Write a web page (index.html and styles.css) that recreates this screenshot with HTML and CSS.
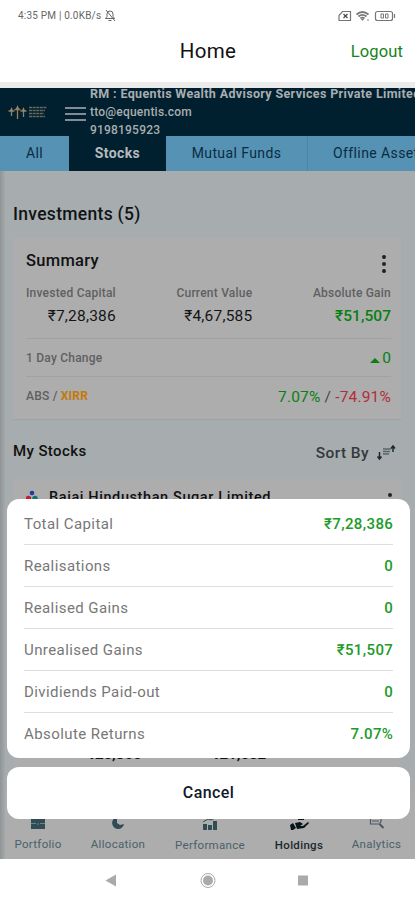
FILE: index.html
```html
<!DOCTYPE html>
<html lang="en">
<head>
<meta charset="utf-8">
<title>Home</title>
<link rel="stylesheet" href="styles.css">
</head>
<body>
<div class="phone">
  <div class="status">
    <span class="clock">4:35 PM | 0.0KB/s</span>
    <svg class="bell" width="12" height="13" viewBox="0 0 12 13" fill="none" stroke="#666" stroke-width="1"><path d="M1.5 9.5h9L9 7.500V5a3 3 0 0 0-6 0v2.500zM4.500 11.500h3M2 1l9 11"/></svg>
    <svg class="signals" width="58" height="12" viewBox="0 0 58 12" fill="none" stroke="#777" stroke-width="1.200"><path d="M4.500 1.500h8v9H1v-5z"/><path stroke="#444" d="m5.500 4 4 4m0-4-4 4"/><path d="M18.500 4.500q6-5 12 0M20.500 6.500q4-3.300 8 0M22.500 8.500q2-1.700 4 0" stroke-width="1.800"/><path d="m24.500 11-1.500-2h3z" fill="#777" stroke="none"/><circle cx="30" cy="10" r=".8" fill="#777" stroke="none"/><rect x="37.500" y="1.500" width="17" height="9" rx="2"/><path d="M56.500 4v4"/><path d="M43 4v4h2.500V4zM47.500 4v4H50V4z" stroke-width="1"/></svg>
  </div>
  <div class="titlebar"><span></span><span class="title">Home</span><span class="logout">Logout</span></div>
  <div class="strip"></div>

  <div class="app">
    <div class="banner">
      <svg class="brand" width="40" height="16" viewBox="0 0 40 16" fill="none" stroke="#947f63"><path d="M3.500 5v7M9.500 3v12M15.500 5v8M.5 7h6M6.500 5.500h6M12.500 7h6" stroke-width="1.300"/><path d="m3.500 3 1.500 4H2zM9.500 1 11 5H8zM15.500 3 17 7h-3z" fill="#a18866" stroke="none"/><path d="M21 3.500h18M21 6.500h16M21 9.500h15M21 12.500h16" stroke="#66695c" stroke-width="1.500" stroke-dasharray="3 .6"/></svg>
      <div class="burger"><i></i><i></i><i></i></div>
      <div class="rm"><div class="rm-name">RM : Equentis Wealth Advisory Services Private Limited</div><div class="rm-mail">tto@equentis.com</div><div class="rm-phone">9198195923</div></div>
    </div>
    <div class="tabs"><div class="tab all">All</div><div class="tab active">Stocks</div><div class="tab funds">Mutual Funds</div><div class="tab offline">Offline Assets</div></div>

    <div class="content">
      <div class="heading">Investments (5)</div>
      <div class="card">
        <div class="card-head"><span>Summary</span><div class="dots"><i></i><i></i><i></i></div></div>
        <div class="figures">
          <div><div class="label">Invested Capital</div><div class="value">₹7,28,386</div></div>
          <div><div class="label">Current Value</div><div class="value">₹4,67,585</div></div>
          <div><div class="label">Absolute Gain</div><div class="value green">₹51,507</div></div>
        </div>
        <div class="line"><span class="label">1 Day Change</span><span class="day green"><i class="up"></i>0</span></div>
        <div class="line"><span class="label abs">ABS / <b>XIRR</b></span><span class="rates"><span class="green">7.07%</span> / <span class="red">-74.91%</span></span></div>
      </div>
      <div class="stocks-head"><span class="my">My Stocks</span><span class="sort">Sort By <svg width="20" height="18" viewBox="0 0 20 18" fill="none" stroke="#20282c" stroke-width="1.500"><path d="M3.500 9v7M1.500 13.500l2 2.500 2-2.500M17 9V3M15 5.500 17 3l2 2.500"/><path d="M7 6h8M7 8.500h7M7 11h6" stroke="#59656a" stroke-width="1.400"/></svg></span></div>
      <div class="stock">
        <div class="stock-head">
          <svg width="12" height="14" viewBox="0 0 12 14"><circle cx="6" cy="3" r="2.300" fill="#203a9a"/><circle cx="2.500" cy="8.500" r="2.700" fill="#c0202a"/><circle cx="9" cy="8.500" r="2.700" fill="#0d7468"/></svg>
          <span>Bajaj Hindusthan Sugar Limited</span><div class="dots"><i></i><i></i><i></i></div>
        </div>
        <div class="stock-values"><span>₹26,800</span><span>₹21,652</span></div>
      </div>
    </div>

    <div class="nav">
      <div class="item i1"><svg width="16" height="14" viewBox="0 0 16 14" fill="#304c54"><path d="M1 3h4V1h6v2h4v10H1z"/><path d="M1 7.500h5m4 0h5M7 8h2" stroke="#8b999d" stroke-width=".7"/></svg><span>Portfolio</span></div>
      <div class="item i2"><svg width="14" height="14" viewBox="0 0 14 14" fill="#304c54"><path d="M6 1v6l3 2 4-1a6 6 0 1 1-7-7z"/></svg><span>Allocation</span></div>
      <div class="item i3"><svg width="16" height="14" viewBox="0 0 16 14" fill="#304c54"><path d="M1 7h4v6H1zM6 8h4v5H6zM11 4h4v9h-4z"/><path d="m1 5 5-3 3 1 4-2" fill="none" stroke="#304c54"/></svg><span>Performance</span></div>
      <div class="item i4"><svg width="20" height="14" viewBox="0 0 20 14" fill="#07141c"><path d="m1 8 3-2 3 5-3 2H2zM6 6l5-1 3 2-3 2h3l5-4q2 1-1 3l-3 3-7 1zM9 1h6v2H9z"/></svg><span>Holdings</span></div>
      <div class="item i5"><svg width="16" height="14" viewBox="0 0 16 14" fill="none" stroke="#48585e" stroke-width="1.200"><path d="M1.500 1v7h9M3 5h7"/><path d="M10.500 1a4 4 0 0 1 0 6.500"/><path d="m10.500 8 4 4" stroke-width="2"/></svg><span>Analytics</span></div>
    </div>
    <div class="edge"></div>

    <div class="sheet">
      <div class="sheet-list">
        <div class="row"><span>Total Capital</span><b>₹7,28,386</b></div>
        <div class="row"><span>Realisations</span><b>0</b></div>
        <div class="row"><span>Realised Gains</span><b>0</b></div>
        <div class="row"><span>Unrealised Gains</span><b>₹51,507</b></div>
        <div class="row"><span>Dividiends Paid-out</span><b>0</b></div>
        <div class="row"><span>Absolute Returns</span><b>7.07%</b></div>
      </div>
      <div class="cancel">Cancel</div>
    </div>
  </div>
  <div class="system"><svg width="415" height="41" viewBox="0 0 415 41" fill="#aaa"><path d="m105.500 21.500 10.500-6v12z"/><circle cx="208" cy="21.500" r="5"/><circle cx="208" cy="21.500" r="7" fill="none" stroke="#aaa"/><path d="M298 16.500h10v10h-10z"/></svg></div>
</div>
</body>
</html>
```
FILE: styles.css
```css
* { box-sizing: border-box; }
body { margin: 0; background: #fff; font-family: Roboto, "Liberation Sans", sans-serif; overflow: hidden; }
.phone { width: 415px; height: 900px; overflow: hidden; display: flex; flex-direction: column; }
svg { display: block; flex: none; }
i { display: block; }
.green { color: #078011; }
.red { color: #b32c3b; }

.status { height: 30px; padding: 1px 19px 0 18px; display: flex; align-items: center; font-size: 10px; color: #666; }
.clock { letter-spacing: .2px; }
.bell { margin-left: 3px; }
.signals { margin-left: auto; }
.titlebar { height: 52px; padding: 0 12px 10px 0; display: grid; grid-template-columns: 140px 136px 1fr; align-items: center; }
.title { text-align: center; font-size: 20.500px; letter-spacing: .3px; color: #111; }
.logout { text-align: right; font-size: 16.500px; letter-spacing: .15px; color: #168322; }
.strip { height: 6px; background: #ebebeb; }

.app { height: 771px; position: relative; overflow: hidden; display: flex; flex-direction: column; background: #a7adae; }
.banner { height: 48px; display: flex; background: #00202f; color: #aaadb0; }
.brand { margin: 16px 0 0 8px; }
.burger { flex: none; width: 21px; margin: 19px 0 0 17px; display: grid; gap: 4px; align-content: start; }
.burger i { height: 2px; background: #858b96; }
.rm { flex: none; margin: -3px 0 0 4px; font-size: 12px; line-height: 18px; font-weight: 500; white-space: nowrap; }
.rm-name { font-size: 12.500px; font-weight: 700; letter-spacing: .35px; }
.rm-mail { letter-spacing: .22px; }
.rm-phone { letter-spacing: .2px; }
.tabs { height: 35px; display: grid; grid-template-columns: 69px 97px 141px 160px; font-size: 14px; line-height: 34px; letter-spacing: .4px; text-align: center; color: #0a2c43; background: #5592b3; white-space: nowrap; }
.active { background: #00202f; color: #b6babd; font-weight: 700; }
.offline { text-align: left; padding-left: 25px; border-left: 1px solid #4c86a6; }

.content { height: 620px; flex: none; padding: 0 14px 0 13px; }
.heading { height: 67px; padding-top: 32px; line-height: 22px; font-size: 17.500px; font-weight: 500; letter-spacing: .3px; color: #101416; }
.card { height: 181px; padding: 0 10px 0 13px; background: #adadad; box-shadow: 0 1px 1px #a0a4a5; }
.card-head { height: 47px; display: flex; justify-content: space-between; align-items: center; padding: 0 5px 2px 0; font-size: 16.500px; font-weight: 500; letter-spacing: .3px; color: #111; }
.card-head .dots { margin-top: 7px; }
.dots { display: grid; gap: 3px; }
.dots i { width: 4px; height: 4px; border-radius: 2px; background: #222; }
.figures { height: 54px; padding-top: 1px; display: flex; justify-content: space-between; text-align: right; border-bottom: 1px solid #a2a2a2; }
.label { font-size: 12px; font-weight: 500; line-height: 15px; letter-spacing: .22px; color: #606060; }
.value { font-size: 15.500px; line-height: 31px; letter-spacing: .2px; font-weight: 400; color: #151515; }
.value.green { color: #078011; font-weight: 500; letter-spacing: .05px; }
.line { height: 38px; padding-top: 1px; display: flex; align-items: center; justify-content: space-between; font-size: 15.500px; color: #444; }
.line:nth-child(3) { border-bottom: 1px solid #a2a2a2; }
.abs b { color: #c1790c; font-weight: 700; }
.day { display: flex; align-items: center; gap: 2px; }
.up { border: 5px solid transparent; border-top: 0; border-bottom: 5px solid #078011; margin-top: 4px; }
.rates { letter-spacing: .18px; }
.stocks-head { height: 60px; display: flex; justify-content: space-between; line-height: 20px; padding: 22px 5px 0 0; color: #111; }
.my { font-size: 15px; font-weight: 500; letter-spacing: .4px; }
.sort { display: flex; gap: 7px; padding-top: 2px; font-size: 15.500px; letter-spacing: .4px; font-weight: 500; color: #333a3d; }
.stock { height: 300px; padding: 0 7px 0 13px; background: #adadad; display: flex; flex-direction: column; }
.stock-head { height: 36px; display: flex; align-items: center; color: #111; font-size: 14.500px; font-weight: 500; letter-spacing: .6px; }
.stock-head span { margin-left: 11px; }
.stock-head svg { margin-top: 0; }
.stock-head .dots { margin: 10px 2px 0 auto; }
.stock-values { margin-top: 228px; display: flex; gap: 70px; padding-left: 61px; font-size: 15px; line-height: 22px; font-weight: 700; color: #111; }

.nav { height: 68px; margin-top: auto; position: relative; background: #adadad; display: grid; grid-template-columns: 76px 84px 100px 78px 77px; font-size: 11.500px; letter-spacing: .3px; color: #496169; }
.item { display: flex; flex-direction: column; align-items: center; padding-top: 25px; gap: 7px; line-height: 14px; }
.i4 { color: #1b282d; font-weight: 500; }
.i3, .i4 { padding-top: 26px; }
.edge { position: absolute; left: 0; top: 83px; width: 5px; bottom: 0; background: linear-gradient(90deg, #8f9496, #a5a9aa); }

.sheet { position: absolute; left: 7px; right: 5px; top: 411px; display: grid; gap: 9px; }
.sheet-list { height: 259px; border-radius: 12px; background: #fff; padding: 4px 17px 0; }
.row { height: 42px; border-bottom: 1px solid #ddd; display: flex; align-items: center; justify-content: space-between; font-size: 15px; letter-spacing: .42px; color: #777; font-weight: 400; }
.row:last-child { border: 0; }
.row b { font-weight: 500; color: #209b29; font-size: 15px; letter-spacing: .4px; margin-right: -.3px; }
.cancel { height: 52px; border-radius: 12px; background: #fff; text-align: center; line-height: 52px; font-size: 16px; font-weight: 500; letter-spacing: .4px; color: #101928; }
.system { height: 41px; }
```
